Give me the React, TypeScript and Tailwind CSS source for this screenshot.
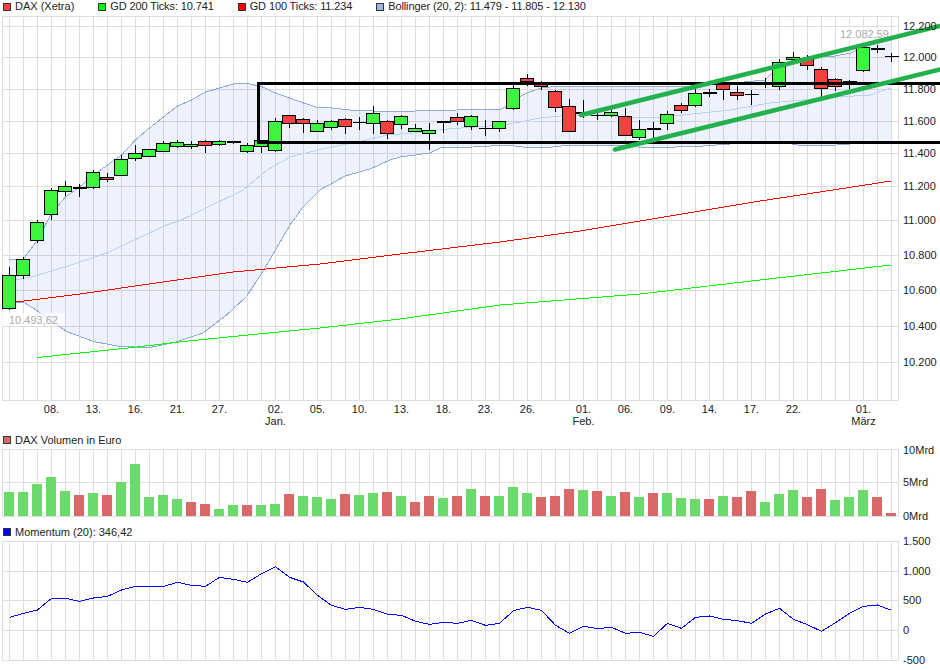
type Pt = [number, number];

const gridX = Array.from({ length: 64 }, (_, k) => 9.5 + 14 * k);

// candles: top, bottom, wick top, wick bottom, g/r, f = doji thick bar, t = doji thin bar
const candles: [number, number, number, number, string][] = [
  [275, 308, 267, 310, "g"], [259, 275, 257, 279, "g"], [222, 240, 220, 243, "g"], [190, 214, 188, 220, "g"],
  [186, 191, 181, 196, "g"], [188, 188, 184, 197, "f"], [172, 187, 170, 189, "g"], [177, 179, 173, 182, "r"],
  [159, 175, 155, 175, "g"], [153, 158, 145, 161, "g"], [149, 156, 149, 156, "g"], [143, 151, 141, 152, "g"],
  [142, 146, 140, 148, "g"], [144, 146, 141, 149, "g"], [141, 145, 140, 153, "r"], [141, 144, 140, 146, "g"],
  [142, 142, 141, 144, "f"], [145, 151, 143, 153, "g"], [140, 146, 140, 153, "g"], [121, 150, 118, 152, "g"],
  [115, 123, 115, 128, "r"], [119, 123, 118, 133, "r"], [123, 131, 120, 131, "g"], [121, 127, 120, 130, "g"],
  [119, 126, 118, 134, "r"], [123, 123, 117, 130, "t"], [113, 123, 106, 134, "g"], [121, 133, 120, 139, "r"],
  [116, 124, 115, 129, "g"], [128, 131, 124, 131, "g"], [130, 133, 123, 150, "g"], [122, 122, 121, 133, "f"],
  [117, 121, 113, 125, "r"], [116, 126, 115, 130, "g"], [129, 129, 120, 136, "t"], [121, 128, 121, 132, "g"],
  [88, 108, 84, 110, "g"], [78, 81, 74, 86, "r"], [84, 86, 81, 90, "r"], [91, 107, 90, 112, "r"],
  [106, 131, 99, 131, "r"], [112, 113, 100, 118, "g"], [116, 116, 113, 120, "t"], [112, 115, 110, 117, "g"],
  [116, 135, 108, 136, "r"], [129, 137, 120, 140, "g"], [129, 129, 122, 138, "f"], [114, 123, 111, 130, "g"],
  [105, 110, 103, 113, "r"], [93, 105, 87, 107, "g"], [93, 93, 89, 97, "f"], [84, 89, 82, 100, "r"],
  [92, 95, 86, 100, "r"], [95, 95, 90, 105, "t"], [83, 83, 78, 88, "t"], [62, 86, 59, 90, "g"],
  [57, 59, 52, 60, "g"], [58, 65, 55, 70, "r"], [69, 88, 67, 101, "r"], [79, 86, 78, 91, "r"],
  [82, 82, 80, 89, "f"], [47, 70, 45, 72, "g"], [49, 49, 45, 53, "f"], [57, 57, 53, 62, "t"],
];

const upper: Pt[] = [
  [9.5, 259.5], [23.5, 259], [37.5, 240], [51.5, 213], [65.5, 197], [79.5, 187], [93.5, 175], [107.5, 165],
  [121.5, 155], [135.5, 140], [149.5, 128], [163.5, 117], [177.5, 106], [191.5, 100], [205.5, 92], [219.5, 88],
  [233.5, 84], [247.5, 83.5], [261.5, 86.5], [275.5, 93], [289.5, 98], [303.5, 103], [317.5, 107.5], [332, 108],
  [350, 110], [373, 111], [415, 111], [457, 110], [485, 109], [499, 110], [505, 107], [513, 100], [527, 93],
  [541, 88], [560, 86], [590, 87], [695, 86], [723, 84], [765, 80], [779.5, 66], [793.5, 60], [807.5, 57],
  [835, 56], [851, 53], [863, 47], [891, 40],
];
const lower: Pt[] = [
  [9.5, 303], [23.5, 302], [37.5, 311], [51.5, 321], [66.5, 331.5], [93.5, 341.5], [120, 346.5], [150, 347.5],
  [176.5, 342], [203, 333], [226.5, 315], [246.5, 296.5], [265, 268], [290, 225], [303, 207], [320, 190],
  [345, 176], [370, 169], [390, 160], [400, 157], [430, 153], [440, 148], [473, 147], [507, 145], [523, 147],
  [553, 147], [570, 145], [613, 145], [650, 148], [703, 146], [730, 144], [763, 141], [787, 143], [803, 146],
  [837, 145], [891, 141],
];
const middle: Pt[] = [
  [9.5, 281], [33, 276.5], [66.5, 266.5], [106.5, 253], [166.5, 225], [181.5, 220], [243, 190], [267, 170],
  [290, 157], [320, 149.5], [362, 141], [387, 135], [413, 133], [447, 129], [503, 125], [520, 122], [540, 118],
  [560, 116], [590, 115], [653, 118], [683, 115], [730, 110], [770, 103], [823, 98], [870, 95], [891, 88],
];
const gd100: Pt[] = [
  [16.5, 302], [80, 294], [166.5, 281.5], [233, 272], [320, 264], [400, 254], [500, 242], [580, 231], [700, 211],
  [760, 201], [820, 192], [891, 181],
];
const gd200: Pt[] = [
  [37.5, 357.5], [80, 353], [133, 347.5], [183, 341.5], [233, 336.5], [320, 328], [400, 319], [500, 305],
  [640, 294], [760, 280], [891, 265],
];

// volume bars, top edge in page px
const volume: [number, string][] = (
  [
    [276, "g"], [276, "g"], [252, "g"], [231, "g"], [273, "g"], [285, "r"], [279, "g"], [285, "r"], [246, "g"],
    [192, "g"], [291, "g"], [285, "g"], [297, "g"], [306, "r"], [312, "r"], [327, "g"], [315, "g"], [315, "r"],
    [315, "g"], [312, "g"], [282, "r"], [288, "g"], [291, "g"], [297, "g"], [282, "r"], [285, "g"], [279, "g"],
    [276, "r"], [288, "g"], [306, "r"], [288, "r"], [294, "g"], [288, "r"], [267, "g"], [288, "r"], [288, "g"],
    [261, "g"], [279, "g"], [291, "r"], [288, "r"], [267, "r"], [270, "g"], [273, "r"], [288, "g"], [276, "r"],
    [291, "g"], [279, "r"], [279, "g"], [294, "g"], [297, "g"], [297, "r"], [288, "g"], [291, "r"], [273, "r"],
    [306, "g"], [282, "g"], [270, "g"], [291, "r"], [267, "r"], [300, "g"], [291, "g"], [270, "g"], [291, "r"],
    [339, "r"],
  ] as [number, string][]
).map(([v, c]) => [400 + v / 3, c]);

const momentum = [
  292, 280, 270, 235, 235, 244, 234, 229, 210, 199, 199, 199, 187, 196, 199, 172, 178, 187, 161, 140, 172, 186,
  226, 256, 268, 262, 268, 283, 286, 304, 313, 307, 310, 301, 316, 310, 272, 262, 271, 316, 340, 319, 326, 322,
  340, 337, 349, 310, 325, 292, 288, 298, 302, 310, 282, 265, 298, 314, 334, 308, 280, 259, 255, 271,
].map((v) => 520 + v / 3);

const priceTicks: [string, number][] = [
  ["12.200", 26.5], ["12.000", 57.5], ["11.800", 89.5], ["11.600", 121.5], ["11.400", 153.5], ["11.200", 186.5],
  ["11.000", 220.5], ["10.800", 255.5], ["10.600", 290.5], ["10.400", 326.5], ["10.200", 362.5],
];
const dateTicks: [string, number][] = [
  ["08.", 3], ["13.", 6], ["16.", 9], ["21.", 12], ["27.", 15], ["02.", 19], ["05.", 22], ["10.", 25], ["13.", 28],
  ["18.", 31], ["23.", 34], ["26.", 37], ["01.", 41], ["06.", 44], ["09.", 47], ["14.", 50], ["17.", 53], ["22.", 56],
  ["01.", 61],
];
const monthTicks: [string, number][] = [["Jan.", 19], ["Feb.", 41], ["März", 61]];

const pts = (list: Pt[]) => list.map(([x, y]) => `${x},${y}`).join(" ");

function Grid({ top, bottom, rows }: { top: number; bottom: number; rows: number[] }) {
  return (
    <g stroke="#dddddd" strokeWidth={1} shapeRendering="crispEdges">
      {gridX.map((x) => (
        <line key={x} x1={x} x2={x} y1={top} y2={bottom} />
      ))}
      {rows.map((y) => (
        <line key={y} x1={2.5} x2={898} y1={y} y2={y} />
      ))}
      <rect x={2.5} y={top} width={895.5} height={bottom - top} fill="none" />
    </g>
  );
}

function Legend({ items, className }: { items: [string, string][]; className: string }) {
  return (
    <div className={`flex items-center gap-6 pl-[3px] ${className}`}>
      {items.map(([color, label]) => (
        <div key={label} className="flex items-center gap-1 not-first:tracking-[-0.12px]">
          <span className="h-2 w-2 border border-[#333333]" style={{ backgroundColor: color }} />
          <span>{label}</span>
        </div>
      ))}
    </div>
  );
}

function PriceChart() {
  return (
    <svg width={940} height={420} viewBox="0 13 940 420" className="block overflow-visible">
      <Grid top={16.5} bottom={400.5} rows={priceTicks.map((t) => t[1])} />
      <polygon points={pts([...upper, ...[...lower].reverse()])} fill="#4d84f0" fillOpacity={0.1} />
      <g fill="none" strokeWidth={1} shapeRendering="crispEdges">
        <polyline points={pts(middle)} stroke="#b9d0f7" />
        <polyline points={pts(upper)} stroke="#8fa9dc" />
        <polyline points={pts(lower)} stroke="#8fa9dc" />
        <polyline points={pts(gd200)} stroke="#00ff00" />
        <polyline points={pts(gd100)} stroke="#ff0000" />
      </g>

      <g shapeRendering="crispEdges">
        {candles.map(([t, b, wt, wb, kind], k) => {
          const x = gridX[k];
          return (
            <g key={k}>
              <line x1={x} x2={x} y1={wt} y2={wb} stroke="#000000" />
              {kind === "f" || kind === "t" ? (
                <rect x={x - 7} y={t - 1} width={14} height={kind === "f" ? 2 : 1} fill="#000000" />
              ) : (
                <rect
                  x={x - 7}
                  y={t + 0.5}
                  width={13}
                  height={b - t}
                  fill={kind === "g" ? "#3df53d" : "#f54040"}
                  stroke="#000000"
                />
              )}
            </g>
          );
        })}
      </g>

      <rect x={2} y={313} width={63} height={13} fill="#ffffff" fillOpacity={0.7} />
      <text x={9} y={324} fill="#aaaaaa">10.493,62</text>
      <rect x={838} y={28} width={52} height={13} fill="#ffffff" fillOpacity={0.7} />
      <text x={840} y={38} fill="#aaaaaa">12.082,59</text>

      {/* hand drawn trend box + channel */}
      <path d="M940 83.5H258.5V142.5H940" fill="none" stroke="#000000" strokeWidth={3} />
      <line x1={581} y1={115} x2={940} y2={26} stroke="#22b14c" strokeWidth={4.5} strokeLinecap="round" />
      <line x1={615} y1={149.5} x2={940} y2={69.5} stroke="#22b14c" strokeWidth={4.5} strokeLinecap="round" />

      {priceTicks.map(([label, y]) => (
        <text key={label} x={903} y={y + 3.5} fill="#222222">{label}</text>
      ))}
      {dateTicks.map(([label, k]) => (
        <text key={k} x={gridX[k]} y={413} textAnchor="middle" fill="#222222">{label}</text>
      ))}
      {monthTicks.map(([label, k]) => (
        <text key={label} x={gridX[k]} y={425} textAnchor="middle" fill="#222222">{label}</text>
      ))}
    </svg>
  );
}

function VolumeChart() {
  return (
    <svg width={940} height={78} viewBox="0 447 940 78" className="block overflow-visible">
      <Grid top={449.5} bottom={516.5} rows={[482.5]} />
      <g shapeRendering="crispEdges">
        {volume.map(([top, c], k) => (
          <rect
            key={k}
            x={gridX[k] - 5.5}
            y={top}
            width={10}
            height={516 - top}
            fill={c === "g" ? "#6adb6a" : "#da6868"}
          />
        ))}
      </g>
      <text x={903} y={454} fill="#222222">10Mrd</text>
      <text x={903} y={486} fill="#222222">5Mrd</text>
      <text x={903} y={520} fill="#222222">0Mrd</text>
    </svg>
  );
}

function MomentumChart() {
  const rows = [571.5, 600.5, 630.5];
  return (
    <svg width={940} height={131} viewBox="0 539 940 131" className="block overflow-visible">
      <Grid top={541.5} bottom={660.5} rows={rows} />
      <polyline
        points={pts(momentum.map((y, k): Pt => [gridX[k], y]))}
        fill="none"
        stroke="#0000ff"
        strokeWidth={1}
        shapeRendering="crispEdges"
      />
      <text x={903} y={545} fill="#222222">1.500</text>
      <text x={903} y={575} fill="#222222">1.000</text>
      <text x={903} y={604} fill="#222222">500</text>
      <text x={903} y={634} fill="#222222">0</text>
      <text x={903} y={664} fill="#222222">-500</text>
    </svg>
  );
}

export default function App() {
  return (
    <div className="h-[670px] w-[940px] overflow-hidden bg-white font-['Liberation_Sans',Arial,sans-serif] text-[11px] text-[#222222]">
      <Legend
        className="h-[13px]"
        items={[
          ["#f54040", "DAX (Xetra)"],
          ["#00ff00", "GD 200 Ticks: 10.741"],
          ["#ff0000", "GD 100 Ticks: 11.234"],
          ["#9ab4e4", "Bollinger (20, 2): 11.479 - 11.805 - 12.130"],
        ]}
      />
      <PriceChart />
      <Legend className="h-[14px]" items={[["#da6868", "DAX Volumen in Euro"]]} />
      <VolumeChart />
      <Legend className="h-[14px]" items={[["#0000ff", "Momentum (20): 346,42"]]} />
      <MomentumChart />
    </div>
  );
}
